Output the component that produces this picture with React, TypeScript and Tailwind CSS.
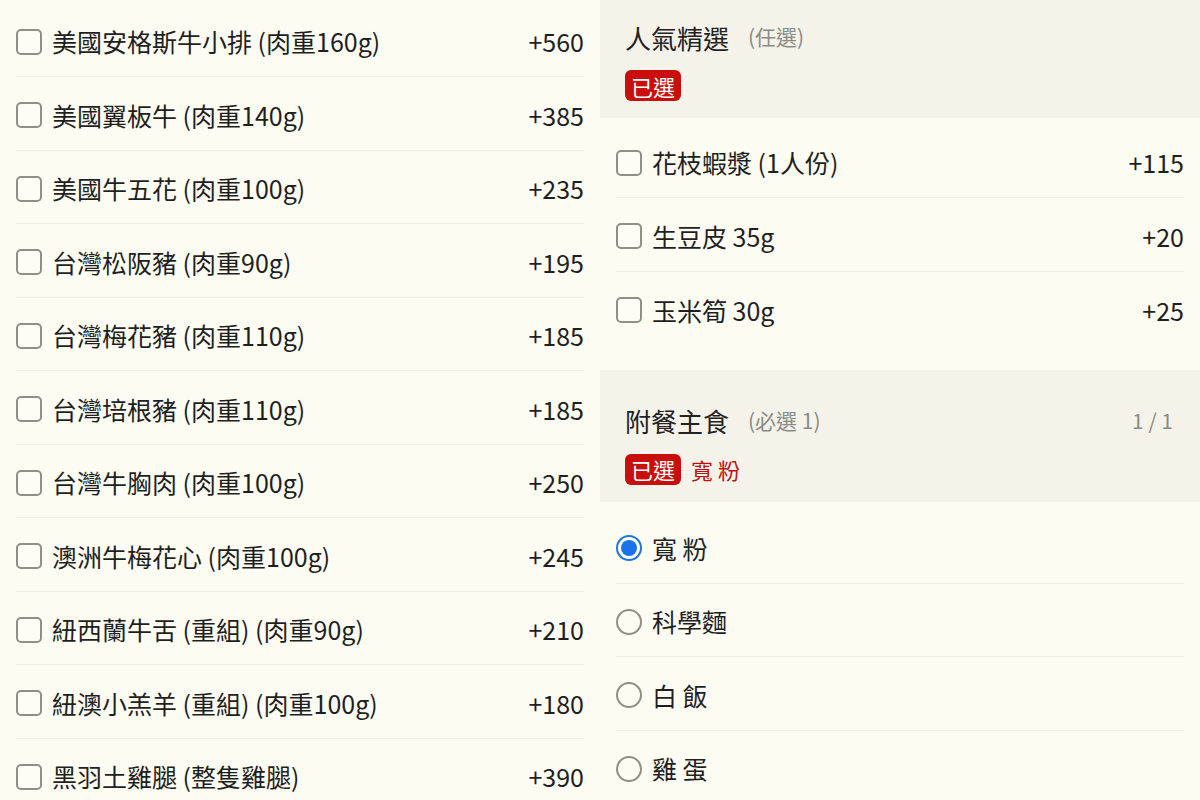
import React from "react";

const meats = [
  { name: "美國安格斯牛小排 (肉重160g)", price: "+560" },
  { name: "美國翼板牛 (肉重140g)", price: "+385" },
  { name: "美國牛五花 (肉重100g)", price: "+235" },
  { name: "台灣松阪豬 (肉重90g)", price: "+195" },
  { name: "台灣梅花豬 (肉重110g)", price: "+185" },
  { name: "台灣培根豬 (肉重110g)", price: "+185" },
  { name: "台灣牛胸肉 (肉重100g)", price: "+250" },
  { name: "澳洲牛梅花心 (肉重100g)", price: "+245" },
  { name: "紐西蘭牛舌 (重組) (肉重90g)", price: "+210" },
  { name: "紐澳小羔羊 (重組) (肉重100g)", price: "+180" },
  { name: "黑羽土雞腿 (整隻雞腿)", price: "+390" },
];

const picks = [
  { name: "花枝蝦漿 (1人份)", price: "+115" },
  { name: "生豆皮 35g", price: "+20" },
  { name: "玉米筍 30g", price: "+25" },
];

const staples = ["寬 粉", "科學麵", "白 飯", "雞 蛋"];

const Checkbox = () => (
  <span className="w-[26px] h-[26px] shrink-0 rounded-[5px] border-2 border-[#8f8f86] bg-[#fdfdf6]" />
);

const Radio = ({ checked }: { checked: boolean }) =>
  checked ? (
    <span className="w-[26px] h-[26px] shrink-0 rounded-full border-2 border-[#1a73e8] flex items-center justify-center bg-white">
      <span className="w-[16px] h-[16px] rounded-full bg-[#1a73e8]" />
    </span>
  ) : (
    <span className="w-[26px] h-[26px] shrink-0 rounded-full border-2 border-[#8f8f86]" />
  );

const Row = ({ children, last }: { children: React.ReactNode; last?: boolean }) => (
  <div
    className={`h-[73.5px] flex items-center gap-[10px] pt-[4px] ${last ? "" : "border-b border-[#efeee3]"}`}
  >
    {children}
  </div>
);

const Badge = () => (
  <span className="inline-flex items-center h-[31px] px-[6px] rounded-[6px] bg-[#c80f0d] text-white text-[22px] leading-none">
    已選
  </span>
);

const Header = ({
  title,
  hint,
  count,
  picked,
  className,
}: {
  title: string;
  hint: string;
  count?: string;
  picked?: string;
  className?: string;
}) => (
  <div className={`bg-[#f5f3e9] px-[25px] pt-[33px] pb-[17px] ${className ?? ""}`}>
    <div className="flex items-center h-[36px]">
      <span className="text-[26px] text-[#222]">{title}</span>
      <span className="ml-[19px] text-[21px] text-[#8a8a85]">{hint}</span>
      {count && <span className="ml-auto mr-[2px] text-[21px] text-[#8a8a85]">{count}</span>}
    </div>
    <div className="mt-[15px] h-[31px] flex items-center gap-[10px]">
      <Badge />
      {picked && <span className="text-[22px] leading-none text-[#c0100e]">{picked}</span>}
    </div>
  </div>
);

export default function App() {
  return (
    <div
      className="w-[1200px] h-[800px] overflow-hidden bg-[#fcfcf2] flex text-[#1f1f1f]"
      style={{ fontFamily: '"Noto Sans CJK TC", "Noto Sans", sans-serif' }}
    >
      {/* left column: meats */}
      <div className="w-[600px] px-4 pt-[3.5px]">
        {meats.map((m) => (
          <Row key={m.name}>
            <Checkbox />
            <span className="text-[25px] flex-1">{m.name}</span>
            <span className="text-[25px]">{m.price}</span>
          </Row>
        ))}
      </div>

      {/* right column */}
      <div className="w-[600px]">
        <Header title="人氣精選" hint="(任選)" className="-mt-[14px]" />
        <div className="px-4 pt-[6.5px] pb-[24.5px]">
          {picks.map((p, i) => (
            <Row key={p.name} last={i === picks.length - 1}>
              <Checkbox />
              <span className="text-[25px] flex-1">{p.name}</span>
              <span className="text-[25px]">{p.price}</span>
            </Row>
          ))}
        </div>
        <Header title="附餐主食" hint="(必選 1)" count="1 / 1" picked="寬 粉" />
        <div className="px-4 pt-[8.5px]">
          {staples.map((s, i) => (
            <Row key={s}>
              <Radio checked={i === 0} />
              <span className="text-[25px] flex-1">{s}</span>
            </Row>
          ))}
        </div>
      </div>
    </div>
  );
}
